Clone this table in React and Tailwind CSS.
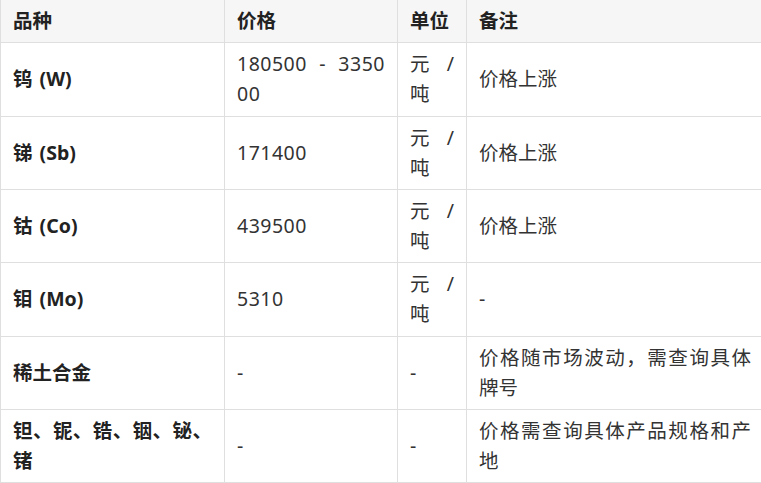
const rows = [
  { name: '钨 (W)', price: '180500 - 335000', unit: '元 / 吨', note: '价格上涨' },
  { name: '锑 (Sb)', price: '171400', unit: '元 / 吨', note: '价格上涨' },
  { name: '钴 (Co)', price: '439500', unit: '元 / 吨', note: '价格上涨' },
  { name: '钼 (Mo)', price: '5310', unit: '元 / 吨', note: '-' },
  { name: '稀土合金', price: '-', unit: '-', note: '价格随市场波动，需查询具体牌号' },
  { name: '钽、铌、锆、铟、铋、锗', price: '-', unit: '-', note: '价格需查询具体产品规格和产地' },
]

function App() {
  return (
    <div className="w-[761px] h-[483px] overflow-hidden bg-white font-['Noto_Sans','Noto_Sans_CJK_SC',sans-serif] text-[19.5px] leading-[30.17px] text-[#333]">
      <table className="w-[763px] table-fixed border-collapse">
        <colgroup>
          <col className="w-[224px]" />
          <col className="w-[173px]" />
          <col className="w-[69px]" />
          <col className="w-[297px]" />
        </colgroup>
        <thead>
          <tr className="bg-[#f6f6f6]">
            {['品种', '价格', '单位', '备注'].map((h) => (
              <th key={h} className="border-x border-b border-[#dfdfdf] px-3 py-[6px] text-left font-bold text-[#222]">
                {h}
              </th>
            ))}
          </tr>
        </thead>
        <tbody>
          {rows.map((r) => (
            <tr key={r.name}>
              <td className="border border-[#dfdfdf] px-3 py-[6px] align-middle font-bold text-[#222] text-justify [word-spacing:2px]">{r.name}</td>
              <td className="border border-[#dfdfdf] px-3 py-[6px] align-middle break-all text-justify tracking-[0.5px] [word-spacing:4px]">{r.price}</td>
              <td className="border border-[#dfdfdf] px-3 py-[6px] align-middle text-justify">{r.unit}</td>
              <td className="border border-[#dfdfdf] px-3 py-[6px] align-middle text-justify">{r.note}</td>
            </tr>
          ))}
        </tbody>
      </table>
    </div>
  )
}

export default App
